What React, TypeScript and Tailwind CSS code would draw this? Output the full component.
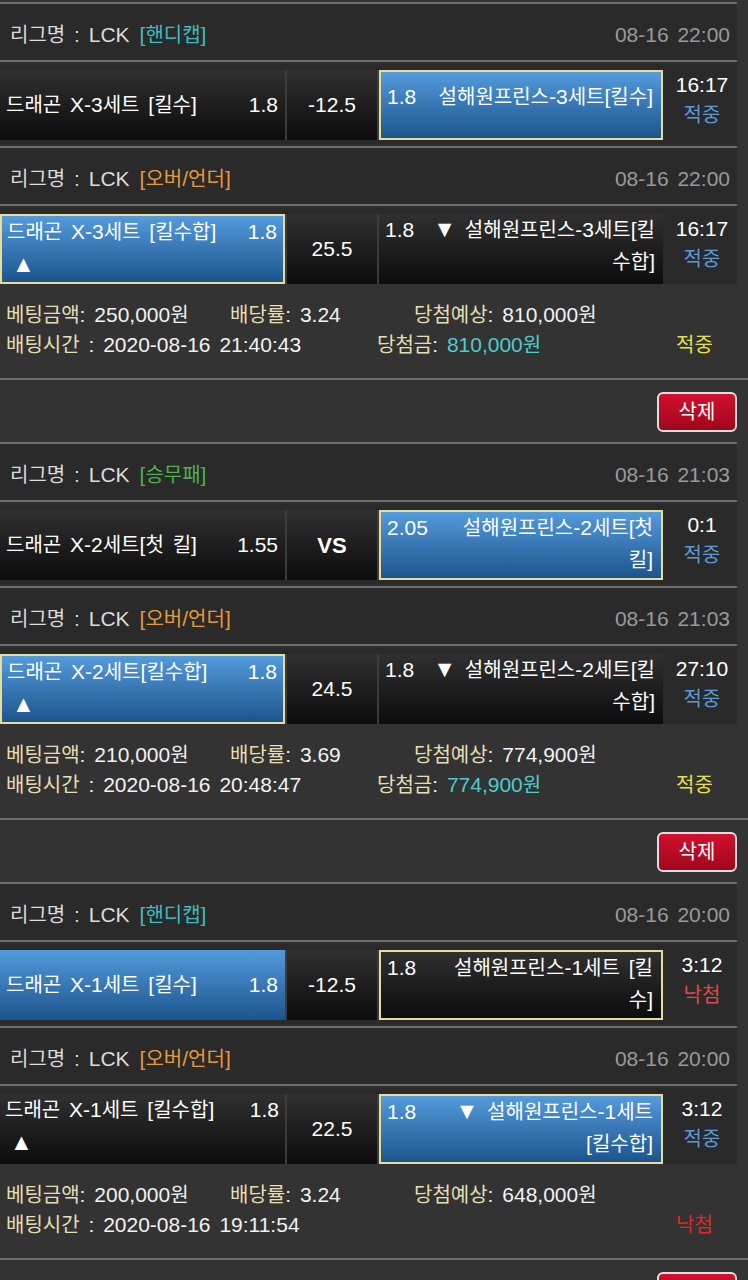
import React from "react";

type Look = "dark" | "blue" | "darkSel" | "blueSel";

const looks: Record<Look, string> = {
  dark: "bg-linear-to-b from-[#303030] to-[#0d0d0d]",
  blue: "bg-linear-to-b from-[#549bdc] to-[#1c558d]",
  darkSel: "bg-linear-to-b from-[#303030] to-[#0d0d0d] border-2 border-[#e8dc9c]",
  blueSel: "bg-linear-to-b from-[#549bdc] to-[#1c558d] border-2 border-[#e8dc9c]",
};

// hangul is set a size down from the latin text around it
const HANGUL = /([\uAC00-\uD7A3]+)/;
const K = ({ t }: { t: string }) => (
  <>
    {t.split(HANGUL).map((s, i) =>
      i % 2 === 1 ? (
        <span key={i} className="text-[20px]">
          {s}
        </span>
      ) : s.includes("▼") ? (
        <span key={i}>
          <span className="text-[23px] leading-none">▼</span>
          {s.replace("▼", "")}
        </span>
      ) : (
        s
      )
    )}
  </>
);

const Line = () => <div className="h-[2px] bg-[#6e6e6e]" />;
const Sep = () => <div className="w-[2px] bg-[#3c3c3c]" />;

interface HeaderProps {
  tag: string;
  tagColor: string;
  date: string;
}

const Header = ({ tag, tagColor, date }: HeaderProps) => (
  <div className="h-[56px] flex items-center justify-between pl-[10px] pr-[7px] pt-[6px]">
    <div className="text-[#dcdcdc]">
      <K t="리그명 : LCK" />
      <span className={"ml-[10px] " + tagColor}>
        <K t={tag} />
      </span>
    </div>
    <div className="text-[#9a9a9a]">{date}</div>
  </div>
);

interface MatchProps {
  left: { name: string; odds: string; arrow?: boolean; look: Look };
  mid: string;
  vs?: boolean;
  right: { odds: string; lines: string[]; look: Look };
  time: string;
  result: "적중" | "낙첨";
  last?: boolean;
}

const MatchRow = ({ left, mid, vs, right, time, result, last }: MatchProps) => (
  <div className={"pt-[8px] " + (last ? "pb-0" : "pb-[6px]")}>
    <div className="flex h-[70px]">
      <div className={"w-[285px] text-white " + looks[left.look]}>
        {left.arrow ? (
          <div className="leading-[32px] pl-[5px] pr-[6px]">
            <div className="flex justify-between">
              <span>
                <K t={left.name} />
              </span>
              <span>{left.odds}</span>
            </div>
            <div className="text-[23px] pl-[5px]">▲</div>
          </div>
        ) : (
          <div className="h-full flex items-center justify-between pl-[6px] pr-[7px]">
            <span>
              <K t={left.name} />
            </span>
            <span>{left.odds}</span>
          </div>
        )}
      </div>
      <Sep />
      <div
        className={
          "w-[90px] flex items-center justify-center text-white " +
          looks.dark +
          (vs ? " font-bold text-[22px]" : "")
        }
      >
        {vs ? "VS" : mid}
      </div>
      <Sep />
      <div className={"w-[284px] text-white " + looks[right.look]}>
        <div
          className={
            "leading-[32px] pl-[6px] pr-[8px] " +
            (right.lines.length === 1 ? "pt-[9px]" : "pt-0")
          }
        >
          <div className="flex justify-between gap-4">
            <span>{right.odds}</span>
            <span className="whitespace-nowrap">
              <K t={right.lines[0]} />
            </span>
          </div>
          {right.lines.slice(1).map((l) => (
            <div key={l} className="text-right">
              <K t={l} />
            </div>
          ))}
        </div>
      </div>
      <div className="flex-1 text-center leading-[30px] pl-[4px]">
        <div className="text-white">{time}</div>
        <div className={result === "적중" ? "text-[#5b9bd6]" : "text-[#e04a4a]"}>
          <K t={result} />
        </div>
      </div>
    </div>
  </div>
);

interface InfoProps {
  amount: string;
  rate: string;
  expect: string;
  time: string;
  won?: string;
  result: "적중" | "낙첨";
}

const L = ({ t }: { t: string }) => (
  <span className="text-[#e6dfb2]">
    <K t={t} />
  </span>
);

const Info = ({ amount, rate, expect, time, won, result }: InfoProps) => (
  <div className="pt-[16px] pb-[18px] pl-[6px] leading-[30px] text-[#f2f2f2]">
    <div className="flex">
      <div className="w-[224px]">
        <L t="베팅금액" />: <K t={amount} />
      </div>
      <div className="w-[184px]">
        <L t="배당률" />: {rate}
      </div>
      <div>
        <L t="당첨예상" />: <K t={expect} />
      </div>
    </div>
    <div className="flex">
      <div className="w-[371px]">
        <L t="배팅시간" /> : {time}
      </div>
      <div className="w-[299px]">
        {won && (
          <>
            <L t="당첨금" />:{" "}
            <span className="text-[#4ccccc]">
              <K t={won} />
            </span>
          </>
        )}
      </div>
      <div className={result === "적중" ? "text-[#e6e04e]" : "text-[#e02828]"}>
        <K t={result} />
      </div>
    </div>
  </div>
);

const DeleteBar = () => (
  <div className="flex justify-end pt-[12px] pb-[10px] pr-[11px]">
    <button className="w-[80px] h-[40px] rounded-[6px] border-2 border-[#dedede] bg-linear-to-b from-[#d3102e] to-[#a0071c] text-white">
      <K t="삭제" />
    </button>
  </div>
);

interface Bet {
  tag: string;
  tagColor: string;
  date: string;
  match: MatchProps;
}

interface GroupProps {
  first: Bet;
  second: Bet;
  info: InfoProps;
}

const Group = ({ first, second, info }: GroupProps) => (
  <div>
    <div className="w-[737px] bg-[#2a2a2a]">
      <Line />
      <Header tag={first.tag} tagColor={first.tagColor} date={first.date} />
      <Line />
      <MatchRow {...first.match} />
      <Line />
      <Header tag={second.tag} tagColor={second.tagColor} date={second.date} />
      <Line />
      <MatchRow {...second.match} last />
    </div>
    <Info {...info} />
    <Line />
    <DeleteBar />
  </div>
);

const HANDI = "text-[#3fbcbf]";
const OVER = "text-[#e8993c]";
const WDL = "text-[#4fb04f]";

const groups: GroupProps[] = [
  {
    first: {
      tag: "[핸디캡]",
      tagColor: HANDI,
      date: "08-16 22:00",
      match: {
        left: { name: "드래곤 X-3세트 [킬수]", odds: "1.8", look: "dark" },
        mid: "-12.5",
        right: { odds: "1.8", lines: ["설해원프린스-3세트[킬수]"], look: "blueSel" },
        time: "16:17",
        result: "적중",
      },
    },
    second: {
      tag: "[오버/언더]",
      tagColor: OVER,
      date: "08-16 22:00",
      match: {
        left: { name: "드래곤 X-3세트 [킬수합]", odds: "1.8", arrow: true, look: "blueSel" },
        mid: "25.5",
        right: { odds: "1.8", lines: ["▼ 설해원프린스-3세트[킬", "수합]"], look: "dark" },
        time: "16:17",
        result: "적중",
      },
    },
    info: {
      amount: "250,000원",
      rate: "3.24",
      expect: "810,000원",
      time: "2020-08-16 21:40:43",
      won: "810,000원",
      result: "적중",
    },
  },
  {
    first: {
      tag: "[승무패]",
      tagColor: WDL,
      date: "08-16 21:03",
      match: {
        left: { name: "드래곤 X-2세트[첫 킬]", odds: "1.55", look: "dark" },
        mid: "VS",
        vs: true,
        right: { odds: "2.05", lines: ["설해원프린스-2세트[첫", "킬]"], look: "blueSel" },
        time: "0:1",
        result: "적중",
      },
    },
    second: {
      tag: "[오버/언더]",
      tagColor: OVER,
      date: "08-16 21:03",
      match: {
        left: { name: "드래곤 X-2세트[킬수합]", odds: "1.8", arrow: true, look: "blueSel" },
        mid: "24.5",
        right: { odds: "1.8", lines: ["▼ 설해원프린스-2세트[킬", "수합]"], look: "dark" },
        time: "27:10",
        result: "적중",
      },
    },
    info: {
      amount: "210,000원",
      rate: "3.69",
      expect: "774,900원",
      time: "2020-08-16 20:48:47",
      won: "774,900원",
      result: "적중",
    },
  },
  {
    first: {
      tag: "[핸디캡]",
      tagColor: HANDI,
      date: "08-16 20:00",
      match: {
        left: { name: "드래곤 X-1세트 [킬수]", odds: "1.8", look: "blue" },
        mid: "-12.5",
        right: { odds: "1.8", lines: ["설해원프린스-1세트 [킬", "수]"], look: "darkSel" },
        time: "3:12",
        result: "낙첨",
      },
    },
    second: {
      tag: "[오버/언더]",
      tagColor: OVER,
      date: "08-16 20:00",
      match: {
        left: { name: "드래곤 X-1세트 [킬수합]", odds: "1.8", arrow: true, look: "dark" },
        mid: "22.5",
        right: { odds: "1.8", lines: ["▼ 설해원프린스-1세트", "[킬수합]"], look: "blueSel" },
        time: "3:12",
        result: "적중",
      },
    },
    info: {
      amount: "200,000원",
      rate: "3.24",
      expect: "648,000원",
      time: "2020-08-16 19:11:54",
      result: "낙첨",
    },
  },
];

export default function App() {
  return (
    <div className="min-h-screen bg-[#333333] pt-[2px] text-[21px] [word-spacing:3px] font-['Liberation_Sans','Noto_Sans_CJK_KR',sans-serif]">
      {groups.map((g, i) => (
        <Group key={i} {...g} />
      ))}
    </div>
  );
}
